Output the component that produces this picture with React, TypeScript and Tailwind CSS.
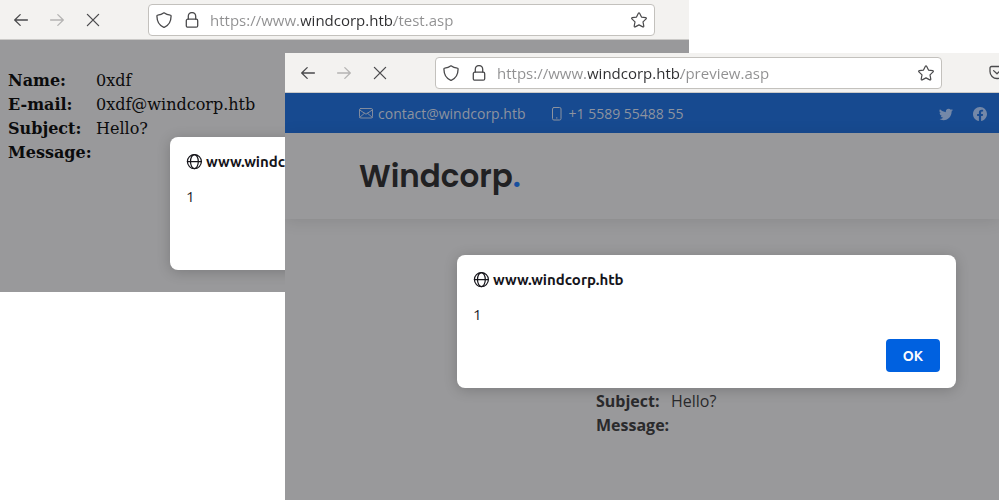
import React from "react";
import { BsTwitter, BsFacebook } from "react-icons/bs";

type IconProps = { className?: string };

const stroke = {
  fill: "none",
  stroke: "currentColor",
  strokeLinecap: "round" as const,
  strokeLinejoin: "round" as const,
};

function BackIcon({ className }: IconProps) {
  return (
    <svg viewBox="0 0 16 16" className={className} {...stroke} strokeWidth="1.3" aria-hidden="true">
      <path d="M14.4 8H1.8M7.2 2.6 1.7 8l5.5 5.4" />
    </svg>
  );
}

function ForwardIcon({ className }: IconProps) {
  return (
    <svg viewBox="0 0 16 16" className={className} {...stroke} strokeWidth="1.3" aria-hidden="true">
      <path d="M1.6 8h12.6M8.8 2.6 14.3 8l-5.5 5.4" />
    </svg>
  );
}

function StopIcon({ className }: IconProps) {
  return (
    <svg viewBox="0 0 16 16" className={className} {...stroke} strokeWidth="1.3" aria-hidden="true">
      <path d="m2.4 2.4 11.2 11.2M13.6 2.4 2.4 13.6" />
    </svg>
  );
}

function ShieldIcon({ className }: IconProps) {
  return (
    <svg viewBox="0 0 16 16" className={className} {...stroke} strokeWidth="1.3" aria-hidden="true">
      <path d="M8 .8c2 1.5 4.2 2.2 6.3 2.4.5 0 .8.4.8.9-.1 5-2.3 9.3-6.5 11a1.500 1.500 0 0 1-1.200 0C3.200 13.400 1 9.100.9 4.100c0-.5.3-.9.8-.9C3.800 3 6 2.300 8 .8Z" />
    </svg>
  );
}

function LockIcon({ className }: IconProps) {
  return (
    <svg viewBox="0 0 16 16" className={className} {...stroke} strokeWidth="1.3" aria-hidden="true">
      <rect x="2.3" y="7.2" width="11.4" height="8" rx="1.5" />
      <path d="M4.3 7V4.200a3.700 3.700 0 0 1 7.400 0V7" />
    </svg>
  );
}

function StarIcon({ className }: IconProps) {
  return (
    <svg viewBox="0 0 16 16" className={className} {...stroke} strokeWidth="1.2" aria-hidden="true">
      <path d="M7.4 1.200a.7.7 0 0 1 1.200 0l1.900 3.900 4.200.6c.6.1.8.8.4 1.200l-3.100 3 .8 4.300c.1.600-.5 1-1 .7L8 12.900l-3.800 2c-.5.300-1.100-.1-1-.7l.8-4.300-3.100-3c-.4-.4-.2-1.100.4-1.200l4.200-.6Z" />
    </svg>
  );
}

function PocketIcon({ className }: IconProps) {
  return (
    <svg viewBox="0 0 16 16" className={className} {...stroke} strokeWidth="1.3" aria-hidden="true">
      <path d="M2.500 1.500h11A1.500 1.500 0 0 1 15 3v3.500a7 7 0 0 1-14 0V3a1.500 1.500 0 0 1 1.500-1.500ZM4.600 5.600 8 8.800l3.400-3.200" />
    </svg>
  );
}

function GlobeIcon({ className }: IconProps) {
  return (
    <svg viewBox="0 0 16 16" className={className} {...stroke} strokeWidth="1.2" aria-hidden="true">
      <circle cx="8.400" cy="7.600" r="7" />
      <ellipse cx="8.400" cy="7.600" rx="3.900" ry="7" />
      <path d="M1.400 7.600h14" />
    </svg>
  );
}

function EnvelopeIcon({ className }: IconProps) {
  return (
    <svg viewBox="0 0 14 14" className={className} {...stroke} strokeWidth="0.9" aria-hidden="true">
      <rect x="0.5" y="1.500" width="13" height="9.500" rx="1.300" />
      <path d="m.7 3 6.300 4.200L13.300 3M.8 10.300l4.600-4M13.200 10.300l-4.600-4" />
    </svg>
  );
}

function PhoneIcon({ className }: IconProps) {
  return (
    <svg viewBox="0 0 14 14" className={className} {...stroke} strokeWidth="1" aria-hidden="true">
      <rect x="2.500" y="0.500" width="8.500" height="12.500" rx="1.400" />
      <path d="M6.700 10.900h.1" strokeWidth="1.300" />
    </svg>
  );
}

type ToolbarProps = { url: string; className: string; children?: React.ReactNode };

function Toolbar({ url, className, children }: ToolbarProps) {
  return (
    <div className={`flex h-10 shrink-0 items-center overflow-hidden border-b border-[#cbcac8] bg-[#f3f2f0] text-[#4a4a4c] ${className}`}>
      <div className="flex shrink-0 gap-5">
        <button type="button" aria-label="Back"><BackIcon className="size-4" /></button>
        <button type="button" aria-label="Forward" disabled className="text-[#b5b4b3]"><ForwardIcon className="size-4" /></button>
        <button type="button" aria-label="Stop"><StopIcon className="size-4" /></button>
      </div>
      <div className="ml-[47px] flex h-8 w-[507px] shrink-0 items-center rounded border border-[#c3c1bd] bg-white px-[7px]">
        <ShieldIcon className="size-4 shrink-0" />
        <LockIcon className="ml-3 size-4 shrink-0" />
        <input
          type="text"
          aria-label="Address"
          defaultValue={url}
          className="ml-[10px] h-6 min-w-0 flex-1 bg-[linear-gradient(to_right,#8f8f90_91px,#2e2e30_91px,#2e2e30_184px,#8f8f90_184px)] bg-clip-text text-[15px] text-transparent outline-none"
        />
        <button type="button" aria-label="Bookmark"><StarIcon className="size-4" /></button>
      </div>
      {children}
    </div>
  );
}

function AlertDialog({ titleId }: { titleId: string }) {
  return (
    <div
      role="dialog"
      aria-labelledby={titleId}
      className="flex w-[499px] shrink-0 flex-col rounded-lg bg-white p-4 font-['Ubuntu','Open_Sans',sans-serif] text-[15px] text-[#15141a] shadow-[0_2px_14px_rgba(0,0,0,0.2)]"
    >
      <h2 id={titleId} className="flex h-[18px] items-center gap-1 font-bold">
        <GlobeIcon className="size-4" />
        www.windcorp.htb
      </h2>
      <p className="mt-4 h-5 leading-5">1</p>
      <button type="button" className="mt-[14px] h-[33px] w-[54px] self-end rounded bg-[#0061e0] text-sm font-bold text-[#fbfbfe]">
        OK
      </button>
    </div>
  );
}

type Row = { label: string; value: string };

const rows: Row[] = [
  { label: "Name:", value: "0xdf" },
  { label: "E-mail:", value: "0xdf@windcorp.htb" },
  { label: "Subject:", value: "Hello?" },
  { label: "Message:", value: "" },
];

function MessageTable({ className, cellClass }: { className: string; cellClass: string }) {
  return (
    <table className={`text-base leading-6 ${className}`}>
      <tbody>
        {rows.map((row) => (
          <tr key={row.label} className="h-6">
            <th scope="row" className={`p-0 text-left font-bold ${cellClass}`}>{row.label}</th>
            <td className="p-0">{row.value}</td>
          </tr>
        ))}
      </tbody>
    </table>
  );
}

function TestWindow() {
  return (
    <section className="absolute top-0 left-0 flex h-[292px] w-[689px] flex-col">
      <Toolbar url="https://www.windcorp.htb/test.asp" className="pl-[13px]" />
      <div className="relative flex-1 overflow-hidden bg-[#99999b] px-2 pt-[29px]">
        <MessageTable className="font-['DejaVu_Serif',serif] text-[#0b0b0c]" cellClass="w-[88px]" />
        <div className="absolute top-[97px] left-[170px]">
          <AlertDialog titleId="test-alert" />
        </div>
      </div>
    </section>
  );
}

function PreviewWindow() {
  return (
    <section className="absolute top-[53px] right-px bottom-0 left-[285px] flex flex-col overflow-hidden bg-[#99999b]">
      <Toolbar url="https://www.windcorp.htb/preview.asp" className="pl-[15px]">
        <button type="button" aria-label="Save to Pocket" className="ml-[47px] shrink-0"><PocketIcon className="size-4" /></button>
      </Toolbar>
      <div className="flex h-10 shrink-0 items-center bg-[#174a90] pt-px pr-3 pl-[74px] text-sm text-[#8d939f]">
        <a href="mailto:contact@windcorp.htb" className="flex items-center gap-[5px]">
          <EnvelopeIcon className="size-[14px]" />
          contact@windcorp.htb
        </a>
        <a href="tel:+155895548855" className="ml-6 flex items-center gap-[5px]">
          <PhoneIcon className="size-[14px]" />
          +1 5589 55488 55
        </a>
        <div className="ml-auto flex gap-5 text-[#7488a8]">
          <a href="#twitter" aria-label="Twitter"><BsTwitter className="size-[14px]" /></a>
          <a href="#facebook" aria-label="Facebook"><BsFacebook className="size-[14px]" /></a>
        </div>
      </div>
      <header className="flex h-[86px] shrink-0 items-center pl-[74px] shadow-[0_2px_15px_rgba(0,0,0,0.1)]">
        <a href="#home" className="font-['Poppins','Inter',sans-serif] text-[31px] font-semibold text-[#212123]">
          Windcorp<span className="text-[#174f9e]">.</span>
        </a>
      </header>
      <main className="relative flex-1 pt-[122px] pl-[311px]">
        <MessageTable className="text-[#2a2a2c]" cellClass="w-[75px]" />
        <div className="absolute top-[36px] left-[172px]">
          <AlertDialog titleId="preview-alert" />
        </div>
      </main>
    </section>
  );
}

export default function App() {
  return (
    <div className="relative min-h-screen overflow-hidden bg-white font-['Open_Sans','Noto_Sans',sans-serif]">
      <TestWindow />
      <PreviewWindow />
    </div>
  );
}
